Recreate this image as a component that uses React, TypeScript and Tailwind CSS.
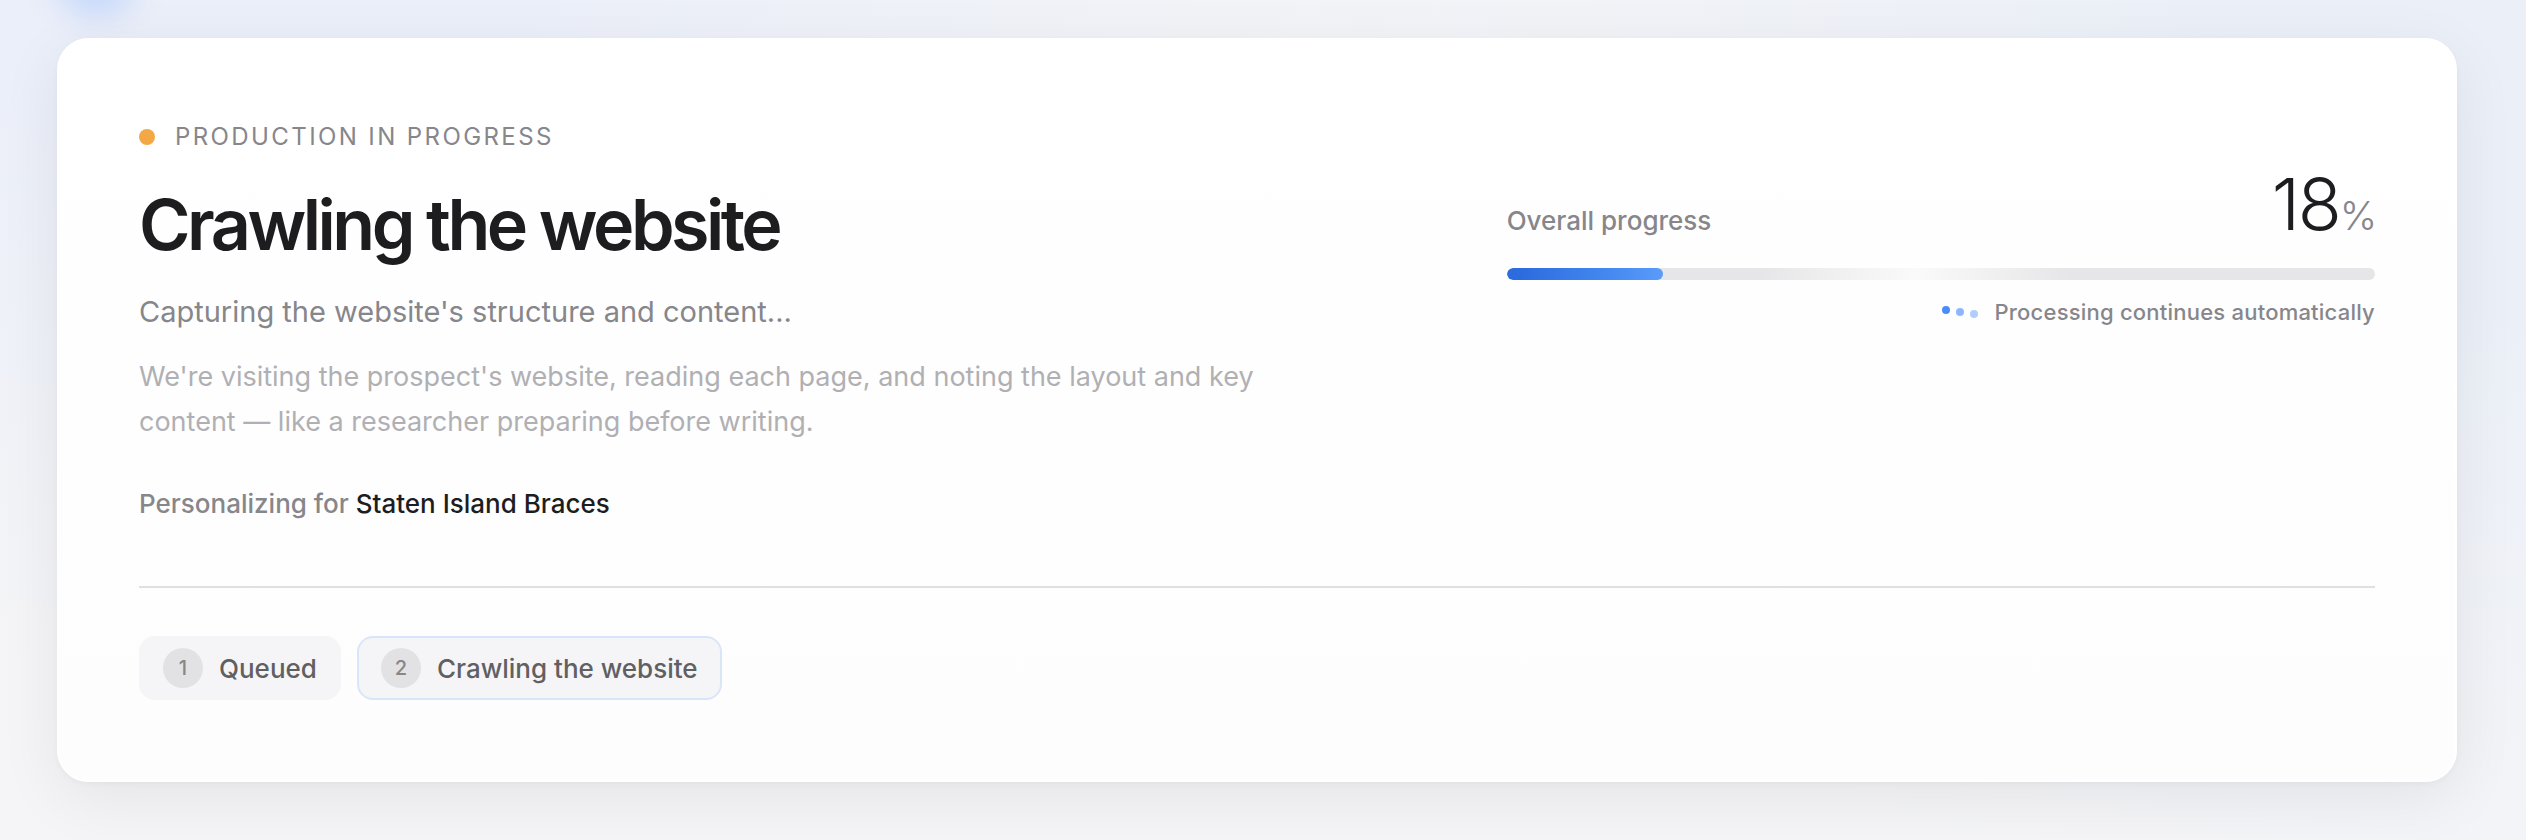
const percent = 18;

const steps = [
  { id: 1, label: "Queued", active: false },
  { id: 2, label: "Crawling the website", active: true },
];

function Overview() {
  return (
    <div className="min-w-0">
      <p className="flex items-center gap-5 text-2xl leading-[34px] tracking-widest text-[#86868b] uppercase">
        <span className="size-4 rounded-full bg-[#f2a945]" />
        Production in progress
      </p>
      <h1 className="mt-[30px] text-[70px] leading-[82px] font-semibold tracking-tighter text-[#1d1d1f]">
        Crawling the website
      </h1>
      <p className="mt-6 text-[29px] leading-[44px] text-[#86868b]">
        Capturing the website's structure and content...
      </p>
      <p className="mt-5 max-w-[1160px] text-[27px] leading-[45px] text-[#b0b0b4]">
        We're visiting the prospect's website, reading each page, and noting the layout and key
        content — like a researcher preparing before writing.
      </p>
      <p className="mt-[42px] text-[26px] leading-9 font-medium text-[#86868b]">
        Personalizing for <strong className="font-medium text-[#1d1d1f]">Staten Island Braces</strong>
      </p>
    </div>
  );
}

function Progress() {
  return (
    <div className="min-w-0 pt-12">
      <div className="flex items-baseline justify-between">
        <span id="progress-label" className="text-[26px] leading-9 font-medium text-[#86868b]">
          Overall progress
        </span>
        <span className="text-[72px] leading-[72px] font-light tracking-[-0.03em] text-[#1d1d1f]">
          {percent}
          <span className="text-[40px] text-[#86868b]">%</span>
        </span>
      </div>
      <div
        role="progressbar"
        aria-labelledby="progress-label"
        aria-valuenow={percent}
        aria-valuemin={0}
        aria-valuemax={100}
        className="mt-4 h-3 overflow-hidden rounded-full bg-[#e6e6e8] bg-[linear-gradient(90deg,transparent_29%,#fafafa_47%,transparent_65%)]"
      >
        <div
          className="h-full rounded-full bg-[linear-gradient(90deg,#2d6cdf_10%,#4286ee_60%,#5a9bfb)]"
          style={{ width: `${percent}%` }}
        />
      </div>
      <p className="mt-4 flex items-center justify-end gap-4 text-[22px] leading-8 font-medium tracking-[0.01em] text-[#86868b]">
        <span className="flex h-3 gap-[6px]">
          <span className="size-2 rounded-full bg-[#4a8cfa]" />
          <span className="size-2 self-center rounded-full bg-[#8db7fd]" />
          <span className="size-2 self-end rounded-full bg-[#b1cefe]" />
        </span>
        Processing continues automatically
      </p>
    </div>
  );
}

export default function App() {
  return (
    <main className="relative min-h-screen overflow-hidden bg-[#f5f5f7] bg-[radial-gradient(ellipse_50%_80%_at_10%_0%,#ebeff9_20%,transparent),radial-gradient(ellipse_50%_100%_at_100%_10%,#eaeff8_20%,transparent)] pt-[38px] pr-[69px] pb-[57px] pl-[57px] font-['Inter',sans-serif]">
      <div className="absolute -top-16 left-14 size-20 rounded-full bg-[#c3d7fa] blur-lg" />
      <section className="relative rounded-[32px] border-2 border-white bg-linear-to-b from-white to-[#fdfdfd] p-20 shadow-[0_16px_64px_rgba(0,0,0,0.07),0_2px_6px_rgba(0,0,0,0.03)]">
        <div className="grid grid-cols-[7fr_5fr] gap-[152px]">
          <Overview />
          <Progress />
        </div>
        <ol className="mt-16 flex flex-wrap gap-4 border-t-2 border-[#e0e0e2] pt-12">
          {steps.map((step) => (
            <li
              key={step.id}
              className={`flex h-16 items-center gap-4 rounded-2xl border-2 bg-[#f5f5f7] px-[22px] text-[26px] font-medium text-[#606063] ${
                step.active ? "border-[#d9e6fa]" : "border-[#f5f5f7]"
              }`}
            >
              <span className="flex size-10 items-center justify-center rounded-full bg-[#e2e2e4] text-xl text-[#86868b]">
                {step.id}
              </span>
              {step.label}
            </li>
          ))}
        </ol>
      </section>
    </main>
  );
}
